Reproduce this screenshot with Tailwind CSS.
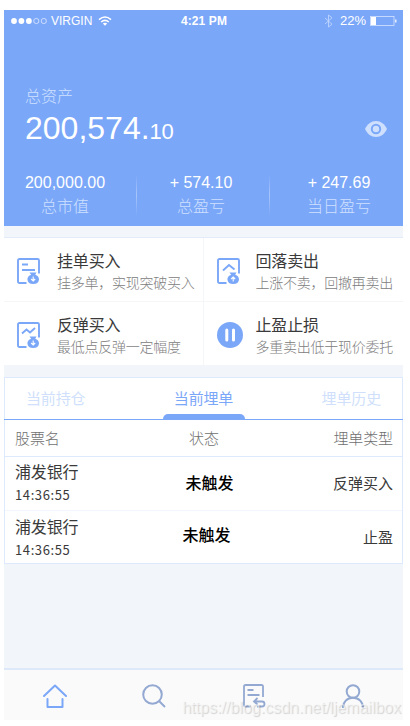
<!DOCTYPE html>
<html lang="zh-CN">
<head>
    <meta charset="UTF-8">
    <meta name="viewport" content="width=device-width, initial-scale=1.0">
    <title>总资产</title>
    <script src="https://cdn.jsdelivr.net/npm/@tailwindcss/browser@4"></script>
</head>
<body class="bg-white font-['Liberation_Sans','Noto_Sans_CJK_SC',sans-serif] h-[726px] overflow-hidden">
    <div class="relative ml-1 mt-2.5 w-[399px] h-[710px] bg-[#f2f6fa] flex flex-col">

        <!-- Assets -->
        <header class="h-[216px] shrink-0 bg-[#7ba7f8] text-white flex flex-col">
            <!-- Status bar -->
            <div class="h-[22px] grid grid-cols-3 items-center pl-[7px] pr-[6px] text-xs leading-[22px]">
                <div class="flex items-center">
                    <svg class="w-9 h-2" viewBox="0 0 36 8" fill="#fff">
                        <circle cx="3" cy="4" r="2.9"/>
                        <circle cx="10.4" cy="4" r="2.9"/>
                        <circle cx="17.9" cy="4" r="2.9"/>
                        <g fill="none" stroke="#fff" stroke-width=".6">
                            <circle cx="25.3" cy="4" r="2.6"/>
                            <circle cx="32.8" cy="4" r="2.6"/>
                        </g>
                    </svg>
                    <span class="ml-1">VIRGIN</span>
                    <svg class="ml-[6px] w-[14px] h-[10px]" viewBox="0 0 14 10" fill="none" stroke="#fff" stroke-width="1.6">
                        <path d="M1 3.6Q7-1.6 13 3.6M3.2 6Q7 2.8 10.8 6"/>
                        <path d="M7 9.8L4.8 7.6Q7 6 9.2 7.6Z" fill="#fff" stroke="none"/>
                    </svg>
                </div>
                <div class="text-center font-bold whitespace-nowrap tracking-[0.1px]">4:21 PM</div>
                <div class="flex items-center justify-end">
                    <svg class="w-[9px] h-[14px]" viewBox="0 0 9 14" fill="none" stroke="#bfd5fd" stroke-width=".9">
                        <path d="M1 4l7 6.2L4.5 13V1L8 3.8 1 10"/>
                    </svg>
                    <span class="ml-[7px] text-[13px]">22%</span>
                    <svg class="ml-[4px] w-[27px] h-[10px]" viewBox="0 0 27 10">
                        <rect x=".5" y=".5" width="23.5" height="9" fill="none" stroke="#d6e4fe" stroke-width=".8"/>
                        <path d="M1 1h5v8H1z" fill="#fff"/>
                        <path d="M25 3.5h1.500v3H25z" fill="#e6effe"/>
                    </svg>
                </div>
            </div>

            <div class="mt-[55px] px-[21px] flex justify-between">
                <div>
                    <p class="text-base leading-5 font-light text-[#cfe0ff]">总资产</p>
                    <p class="mt-[3px] text-[32px] leading-9 whitespace-nowrap">200,574.<span class="text-[22px] tracking-[-0.3px]">10</span></p>
                </div>
                <svg class="mt-[34px] -mr-[5px] w-[22px] h-4" viewBox="0 0 22 16">
                    <path d="M0 8C2.3 3 6.3 0 11 0s8.700 3 11 8c-2.300 5-6.300 8-11 8S2.300 13 0 8z" fill="#cfe0ff"/>
                    <circle cx="11" cy="8" r="4.200" fill="#cfe0ff" stroke="#7ba7f8" stroke-width="2"/>
                </svg>
            </div>

            <div class="mt-[20px] flex h-[50px] text-center text-base whitespace-nowrap">
                <div class="w-[132px] pr-[10px]">
                    <p class="leading-[26px]">200,000.00</p>
                    <p class="leading-[22px] font-light text-[#cfe0ff]">总市值</p>
                </div>
                <div class="w-px h-[42px] mt-1 bg-linear-to-b from-white/0 via-white/35 to-white/0"></div>
                <div class="w-[132px] pr-[4px]">
                    <p class="leading-[26px]">+ 574.10</p>
                    <p class="leading-[22px] font-light text-[#cfe0ff]">总盈亏</p>
                </div>
                <div class="w-px h-[42px] mt-1 bg-linear-to-b from-white/0 via-white/35 to-white/0"></div>
                <div class="flex-1 pl-[5px]">
                    <p class="leading-[26px]">+ 247.69</p>
                    <p class="leading-[22px] font-light text-[#cfe0ff]">当日盈亏</p>
                </div>
            </div>
        </header>

        <!-- Order types -->
        <section class="mt-[11px] h-[128px] shrink-0 bg-white border-t border-[#e1ebf9] grid grid-cols-2 grid-rows-2">
            <div class="flex border-b border-r border-[#f5f6f8] pl-[13px] pt-[14px]">
                <svg class="mt-[6px] w-[24px] h-[27px] shrink-0" viewBox="0 0 24 27" fill="none" stroke="#7ba7f8" stroke-width="1.900">
                    <path d="M9.500 25H2.500Q1 25 1 23.500V2.500Q1 1 2.500 1H20.500Q22 1 22 2.500V15.500M5 6.500h6M5 12h13"/>
                    <path d="M12.500 14.500h7l-1.300 2.200Q22 18 22 21.500 21.500 26 16.200 26T10.400 21.500Q10.400 18 14.200 16.700z" fill="#7ba7f8" stroke="none"/>
                    <path d="M16.200 18.500v4.500M14.200 21l2 2 2-2" stroke="#fff" stroke-width="1.100"/>
                </svg>
                <div class="ml-[16px] whitespace-nowrap">
                    <p class="text-base leading-5 tracking-[-0.15px] text-[#3a3a3a]">挂单买入</p>
                    <p class="text-sm leading-[22px] tracking-[-0.25px] font-light text-[#808080]">挂多单，实现突破买入</p>
                </div>
            </div>
            <div class="flex border-b border-[#f5f6f8] pl-[13px] pt-[14px]">
                <svg class="mt-[6px] w-[24px] h-[27px] shrink-0" viewBox="0 0 24 27" fill="none" stroke="#7ba7f8" stroke-width="1.900">
                    <path d="M9.500 25H2.500Q1 25 1 23.500V2.500Q1 1 2.500 1H20.500Q22 1 22 2.500V15.500M6 12.500l6-5.500 5.500 4.500"/>
                    <path d="M12.500 14.500h7l-1.300 2.200Q22 18 22 21.500 21.500 26 16.200 26T10.400 21.500Q10.400 18 14.200 16.700z" fill="#7ba7f8" stroke="none"/>
                    <path d="M16.200 23.500V19M14.200 21l2-2 2 2" stroke="#fff" stroke-width="1.100"/>
                </svg>
                <div class="ml-[15px] whitespace-nowrap">
                    <p class="text-base leading-5 tracking-[-0.15px] text-[#3a3a3a]">回落卖出</p>
                    <p class="text-sm leading-[22px] tracking-[-0.25px] font-light text-[#808080]">上涨不卖，回撤再卖出</p>
                </div>
            </div>
            <div class="flex border-r border-[#f5f6f8] pl-[13px] pt-[14px]">
                <svg class="mt-[6px] w-[24px] h-[27px] shrink-0" viewBox="0 0 24 27" fill="none" stroke="#7ba7f8" stroke-width="1.900">
                    <path d="M9.500 25H2.500Q1 25 1 23.500V2.500Q1 1 2.500 1H20.500Q22 1 22 2.500V15.500M5 11.500l4.500-4 3.500 3L18 6"/>
                    <path d="M12.500 14.500h7l-1.300 2.200Q22 18 22 21.500 21.500 26 16.200 26T10.400 21.500Q10.400 18 14.200 16.700z" fill="#7ba7f8" stroke="none"/>
                    <path d="M16.200 18.500v4.500M14.200 21l2 2 2-2" stroke="#fff" stroke-width="1.100"/>
                </svg>
                <div class="ml-[16px] whitespace-nowrap">
                    <p class="text-base leading-5 tracking-[-0.15px] text-[#3a3a3a]">反弹买入</p>
                    <p class="text-sm leading-[22px] tracking-[-0.25px] font-light text-[#808080]">最低点反弹一定幅度</p>
                </div>
            </div>
            <div class="flex pl-[13px] pt-[14px]">
                <svg class="mt-[6px] w-[26px] h-[26px] shrink-0" viewBox="0 0 26 26">
                    <circle cx="13" cy="13" r="13" fill="#7ba7f8"/>
                    <path d="M9.800 8v10M16.500 8v10" stroke="#fff" stroke-width="3" stroke-linecap="round"/>
                </svg>
                <div class="ml-[13px] whitespace-nowrap">
                    <p class="text-base leading-5 tracking-[-0.15px] text-[#3a3a3a]">止盈止损</p>
                    <p class="text-sm leading-[22px] tracking-[-0.25px] font-light text-[#808080]">多重卖出低于现价委托</p>
                </div>
            </div>
        </section>

        <!-- Tabs and orders -->
        <section class="mt-[12px] h-[187px] shrink-0 bg-white border border-[#dde9fc]">
            <div class="relative h-[42px] -mx-px px-[22px] border-b border-[#7ba7f8] flex justify-between text-[15px] leading-[42px] tracking-[-0.15px] text-[#cfdffc]">
                <span>当前持仓</span>
                <span class="text-[#7ba7f8]">当前埋单</span>
                <span>埋单历史</span>
                <div class="absolute bottom-0 left-[159px] w-[82px] h-[5px] rounded-t-[8px] bg-[#7ba7f8]"></div>
            </div>
            <div class="h-[37px] pl-[10px] pr-[9px] border-b border-[#dde9fc] grid grid-cols-3 text-[15px] leading-[37px] tracking-[-0.1px] font-light text-[#707070]">
                <span>股票名</span>
                <span class="text-center">状态</span>
                <span class="text-right">埋单类型</span>
            </div>
            <div class="h-[54px] pl-[10px] pr-[9px] border-b border-[#f2f6fd] grid grid-cols-3 items-center text-[#3a3a3a]">
                <div class="pt-px">
                    <p class="text-base leading-[22px] tracking-[-0.15px]">浦发银行</p>
                    <p class="text-[13px] leading-[22px] tracking-[0.6px] font-['Noto_Sans_CJK_SC',sans-serif]">14:36:55</p>
                </div>
                <span class="text-center pl-[11px] text-base leading-5 font-medium text-black">未触发</span>
                <span class="text-right text-[15px] leading-5">反弹买入</span>
            </div>
            <div class="h-[52px] pl-[10px] pr-[9px] grid grid-cols-3 items-center text-[#3a3a3a]">
                <div class="pt-[3px]">
                    <p class="text-base leading-[22px] tracking-[-0.15px]">浦发银行</p>
                    <p class="text-[13px] leading-[22px] tracking-[0.6px] font-['Noto_Sans_CJK_SC',sans-serif]">14:36:55</p>
                </div>
                <span class="text-center pl-[5px] pb-[3px] text-base leading-5 font-medium text-black">未触发</span>
                <span class="text-right pt-[2px] text-[15px] leading-5">止盈</span>
            </div>
        </section>

        <!-- Bottom bar -->
        <nav class="mt-auto h-[52px] shrink-0 bg-[#fafafa] border-t-2 border-[#dde8f8] grid grid-cols-4 justify-items-center pt-[14px] pl-px">
            <svg class="w-6 h-6" viewBox="0 0 24 24" fill="none" stroke="#7ba7f8" stroke-width="2" stroke-linecap="round" stroke-linejoin="round">
                <path d="M1 12L12 1.500 23 12M4.500 15v8h15v-8"/>
            </svg>
            <svg class="w-6 h-6" viewBox="0 0 24 24" fill="none" stroke="#93a9d2" stroke-width="2">
                <circle cx="10.500" cy="10.500" r="9.300"/>
                <path d="M17 17l6 6"/>
            </svg>
            <svg class="w-6 h-6" viewBox="0 0 24 24" fill="none" stroke="#93a9d2" stroke-width="1.800">
                <path d="M21 13V2.500Q21 1 19.500 1H3.500Q2 1 2 2.500V21Q2 22.500 3.500 22.500H9M5.500 6h6M5.500 11h12M15.500 14l-3.500 3.500 3.500 3M12 17.500h8q2.500 0 2.500 2.500t-2.500 2.500h-5"/>
            </svg>
            <svg class="w-6 h-6" viewBox="0 0 24 24" fill="none" stroke="#93a9d2" stroke-width="2">
                <circle cx="12" cy="7.500" r="6.300"/>
                <path d="M2 24c0-6 4-10.200 10-10.200S22 18 22 24"/>
            </svg>
        </nav>

        <div class="absolute right-[2px] bottom-[2px] text-base leading-5 whitespace-nowrap text-[#f8f8f8]/60 [text-shadow:1px_1px_1px_rgba(0,0,0,0.16)]">https://blog.csdn.net/ljemailbox</div>
    </div>
</body>
</html>
